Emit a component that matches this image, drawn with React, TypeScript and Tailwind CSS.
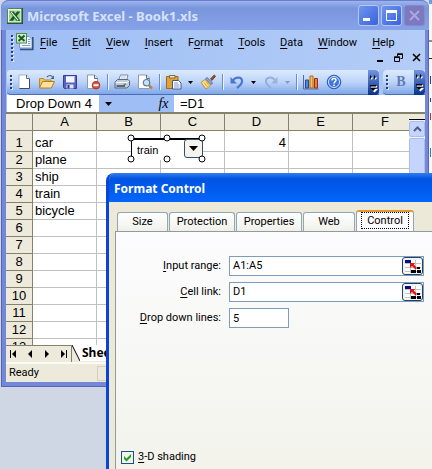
import { useState } from "react";
import type { ReactNode } from "react";

const MENUS = ["File", "Edit", "View", "Insert", "Format", "Tools", "Data", "Window", "Help"];
const COLUMNS = ["A", "B", "C", "D", "E", "F"];
const CARGO = ["car", "plane", "ship", "train", "bicycle"];
const ROWS = Array.from({ length: 12 }, (_, i) => i + 1);

function Mnemonic({ text, at = 0 }: { text: string; at?: number }) {
  return (
    <>
      {text.slice(0, at)}
      <span className="underline underline-offset-2">{text[at]}</span>
      {text.slice(at + 1)}
    </>
  );
}

function ExcelIcon({ className }: { className: string }) {
  return (
    <svg className={className} viewBox="0 0 16 16" aria-hidden="true">
      <rect x="0.5" y="0.5" width="15" height="15" rx="1" fill="#f4f8ee" stroke="#4d8a4a" />
      <path d="M0 15.2h16M15.2 0v16" stroke="#1d5c26" strokeWidth="1.6" />
      <rect x="2" y="2.500" width="11.500" height="11" fill="#a5cf98" />
      <path d="M2.500 3.500h4.200l1.600 2.300L10 3.500h3.200L9.900 8l3.600 4.800H9.300L7.700 10.300 6 12.800H2.300L6 8z" fill="#135d22" />
      <path d="M4.200 4.200l6.800 8" stroke="#f2faee" strokeWidth="1.100" />
    </svg>
  );
}

function WorkbookIcon() {
  return (
    <svg className="h-[18px] w-[18px]" viewBox="0 0 18 18" aria-hidden="true">
      <path d="M6 3.500h7l3 3V15H3.500V9z" fill="#f4f9ff" stroke="#7d95c0" />
      <path d="M16.800 4v12.500H4" fill="none" stroke="#34507e" strokeWidth="1.600" />
      <path d="M12 6.500h2.500M12 8.500h2.500M12 10.500h2.500M6 12.500h8.500" stroke="#7f9ccf" />
      <rect x="0.500" y="0.500" width="10" height="9.500" fill="#d6ebcd" stroke="#4d8a4a" />
      <path d="M2.500 2.500l6 5.500M8.500 2.500l-6 5.500" stroke="#135d22" strokeWidth="2" />
    </svg>
  );
}

const icons: Record<string, ReactNode> = {
  New: (
    <>
      <path d="M3 1h7.500l3 3v10.500H3z" fill="#fff" stroke="#a5b4d0" />
      <path d="M10.500 1v3.500h3" fill="#dce6f6" stroke="#5b6b8c" />
      <path d="M13.500 5v9.500H3.500" fill="none" stroke="#3b4a6b" />
    </>
  ),
  Open: (
    <>
      <path d="M.500 13.500v-9h4l1 1.500h6.500v7.500z" fill="#f3c45a" stroke="#b98a35" />
      <path d="M.500 14l3-6.500h12l-3.200 6.500z" fill="#ffe39a" stroke="#b07d24" />
      <path d="M8 3c2-2.200 4.500-1.800 5.500 0" fill="none" stroke="#50617f" strokeWidth="1.200" />
      <path d="M15 1.500v3.500h-3.500z" fill="#50617f" />
    </>
  ),
  Save: (
    <>
      <path d="M1.500 1.500h13v13h-12l-1-1z" fill="#5a63c4" stroke="#343c96" />
      <path d="M4 2h8.500v6.500H4z" fill="#f2f5ff" />
      <path d="M4 2.500h8.500" stroke="#cfd6f4" />
      <path d="M4.500 10.500h7v4h-7z" fill="#dfe4f6" />
      <path d="M5.500 11h2v3.500h-2z" fill="#2d3477" />
    </>
  ),
  Permission: (
    <>
      <path d="M2.500 1h7l3 3v10.500h-10z" fill="#fff" stroke="#8c9ab8" />
      <path d="M9.500 1v3.500h3" fill="#dce6f6" stroke="#5b6b8c" />
      <circle cx="11" cy="11.200" r="3.800" fill="#dd5238" stroke="#b03520" />
      <path d="M8.500 11.200h5" stroke="#fff" strokeWidth="2" />
    </>
  ),
  Print: (
    <>
      <path d="M4.500 6.500L6.500 1H14l-1.500 5.500z" fill="#fff" stroke="#7888a8" />
      <path d="M7 3h5M6.500 5h5" stroke="#b4c3de" />
      <path d="M1 8l2.500-2.500h10.500L15.500 7v4.500L13 14H1z" fill="#c3ccdb" stroke="#5c6883" />
      <path d="M1.500 8.500h11.500l2-1.500" fill="none" stroke="#f5f8fd" />
      <path d="M2.500 12h8.500" stroke="#38435e" strokeWidth="1.500" />
      <path d="M9.500 10.300h2.500" stroke="#3dae3b" strokeWidth="1.500" />
    </>
  ),
  "Print Preview": (
    <>
      <path d="M1.500 1h8l3 3v10.500h-11z" fill="#fff" stroke="#8c9ab8" />
      <path d="M9.500 1v3.500h3" fill="#dce6f6" stroke="#5b6b8c" />
      <circle cx="9.500" cy="8.700" r="3.200" fill="#c5e2fb" stroke="#62799c" strokeWidth="1.200" />
      <path d="M12 11.300l3 3.200" stroke="#b98331" strokeWidth="2.200" />
    </>
  ),
  Paste: (
    <>
      <path d="M.500 2.500h11.500v12H.500z" fill="#dfa13b" stroke="#9b6a1f" />
      <path d="M3.500 4v-2.500h5.500V4z" fill="#f7ecc8" stroke="#7a6a42" />
      <path d="M6.500 6.500h6l2.500 2.500v6H6.500z" fill="#fff" stroke="#43588a" />
      <path d="M8 9h4M8 11h5.500M8 13h5.500" stroke="#7c95c8" />
    </>
  ),
  "Format Painter": (
    <>
      <path d="M10.500 5l3.800-4 1.200 1.200-3.500 4.200z" fill="#8a5a2a" stroke="#65401b" />
      <path d="M7 3.500l5.500 5.500-1.500 1.500L5.500 5z" fill="#9aa9c8" stroke="#596a92" />
      <path d="M5 5.500l5.500 5.500c-1 1.500-2.500 3-4.500 4L1 8.500z" fill="#fbe191" stroke="#b98f3a" />
      <path d="M4 8.500L7.500 13M6 7.500l3 4" stroke="#d0a548" />
    </>
  ),
  Undo: (
    <>
      <path d="M4 6.500C7 2 14 3 13 8c-.500 3-3 4.500-5 6" fill="none" stroke="#4d78cc" strokeWidth="2.200" />
      <path d="M1.500 3v6.500H8z" fill="#4a77d3" />
    </>
  ),
  Redo: (
    <>
      <path d="M12 6.500C9 2 2 3 3 8c.500 3 3 4.500 5 6" fill="none" stroke="#97aed6" strokeWidth="2" />
      <path d="M14.500 3v6.500H8z" fill="#9db3da" />
    </>
  ),
  "Chart Wizard": (
    <>
      <path d="M.500 1v14H15.500" fill="none" stroke="#5a6b90" />
      <path d="M2.500 6h3v8h-3z" fill="#5b86dd" stroke="#234a9a" />
      <path d="M7 2h3v12H7z" fill="#fbc43c" stroke="#b5651b" />
      <path d="M11.500 4.500h3V14h-3z" fill="#ee7a3b" stroke="#97301b" />
    </>
  ),
  Help: (
    <>
      <circle cx="8" cy="8" r="6.800" fill="#3c74dc" stroke="#2c5cb8" />
      <circle cx="8" cy="8" r="5.500" fill="none" stroke="#dbe8ff" />
      <path d="M6 6.500c0-2.500 4-2.500 4-.300 0 1.500-2 1.500-2 3.300M8 10.500V12" fill="none" stroke="#fff" strokeWidth="1.500" />
    </>
  ),
};

function ToolButton({ name }: { name: string }) {
  return (
    <button type="button" aria-label={name} className="flex h-6 w-[23px] items-center justify-center">
      <svg className="h-4 w-4" viewBox="0 0 16 16" aria-hidden="true">
        {icons[name]}
      </svg>
    </button>
  );
}

function Caret({ dim = false, label }: { dim?: boolean; label: string }) {
  return (
    <button type="button" aria-label={label} className="flex h-6 w-[11px] items-center justify-center">
      <svg className="h-[3px] w-[5px]" viewBox="0 0 5 3" aria-hidden="true">
        <path d="M0 0h5L2.500 3z" fill={dim ? "#8498c0" : "#000"} />
      </svg>
    </button>
  );
}

function Separator() {
  return (
    <span className="flex h-6 w-[6px] justify-center py-1">
      <span className="w-px bg-[#6a8ccb] shadow-[1px_0_0_#eef5ff]" />
    </span>
  );
}

function Grip({ dots }: { dots: number }) {
  return (
    <span className="flex flex-col gap-[2px]">
      {Array.from({ length: dots }, (_, i) => (
        <span key={i} className="h-[2px] w-[2px] bg-[#27417b] shadow-[1px_1px_0_#dfeaff]" />
      ))}
    </span>
  );
}

function ToolbarEnd() {
  return (
    <button
      type="button"
      aria-label="Toolbar Options"
      className="flex h-[25px] w-[11px] shrink-0 items-center justify-center rounded-r-sm bg-linear-to-b from-[#7495e0] to-[#06308c]"
    >
      <svg className="h-5 w-[9px]" viewBox="0 0 9 20" aria-hidden="true">
        <path d="M2 3l2 2-2 2zM6 3l2 2-2 2z" fill="#fff" />
        <path d="M1 2l2 2-2 2zM5 2l2 2-2 2z" fill="#000" />
        <path d="M2 13h6v1.500H2zM2 16h7l-3.500 3.500z" fill="#fff" />
        <path d="M1 12h6v1.500H1zM1 15h6l-3 3z" fill="#000" />
      </svg>
    </button>
  );
}

function TitleBar() {
  return (
    <header className="flex h-[30px] items-center gap-1 rounded-t-lg border-t border-[#6a7fcb] bg-linear-to-b from-[#9db4ee] via-[#7996dd] via-25% to-[#86a2e8] pr-1 pl-[6px]">
      <ExcelIcon className="h-4 w-4" />
      <h1 className="flex-1 font-['Noto_Sans',sans-serif] text-[13px] leading-4 font-bold text-[#d5e2fb]">
        Microsoft Excel - Book1.xls
      </h1>
      <div className="flex gap-[2px]">
        <button type="button" aria-label="Minimize" className="h-[21px] w-[21px] rounded-[3px] border border-[#b5c8f5] bg-linear-to-br from-[#6f93ee] to-[#3863dc]">
          <svg viewBox="0 0 19 19" aria-hidden="true">
            <path d="M4 12h7v3H4z" fill="#fff" />
          </svg>
        </button>
        <button type="button" aria-label="Maximize" className="h-[21px] w-[21px] rounded-[3px] border border-[#b5c8f5] bg-linear-to-br from-[#6f93ee] to-[#3863dc]">
          <svg viewBox="0 0 19 19" aria-hidden="true">
            <path d="M4.500 5v9.500h10V5" fill="none" stroke="#fff" />
            <path d="M4 4h11v3H4z" fill="#fff" />
          </svg>
        </button>
        <button type="button" aria-label="Close" className="h-[21px] w-[21px] rounded-[3px] border border-[#8a88cb] bg-[#7b7ac0]">
          <svg viewBox="0 0 19 19" aria-hidden="true">
            <path d="M5 5l9 9M14 5l-9 9" stroke="#b1a6dc" strokeWidth="2" />
          </svg>
        </button>
      </div>
    </header>
  );
}

function MenuBar() {
  return (
    <div className="flex h-10 items-start bg-linear-to-r from-[#9ebef5] to-[#b4cdf7] pl-[5px]">
      <div className="flex pt-[5px]">
        <Grip dots={7} />
      </div>
      <div className="ml-[3px] pt-[3px]">
        <WorkbookIcon />
      </div>
      <div className="flex flex-1 flex-col">
        <nav className="ml-[6px] flex gap-[15px] pt-[5px] text-[11px] leading-4">
          {MENUS.map((menu) => (
            <button key={menu} type="button">
              <Mnemonic text={menu} at={menu === "Format" ? 1 : 0} />
            </button>
          ))}
        </nav>
        <div className="flex justify-end gap-[9px] pt-[2px] pr-1">
          <button type="button" aria-label="Minimize workbook">
            <svg className="h-[9px] w-[9px]" viewBox="0 0 9 9" aria-hidden="true">
              <path d="M1 7h6v2H1z" />
            </svg>
          </button>
          <button type="button" aria-label="Restore workbook">
            <svg className="h-[9px] w-[9px]" viewBox="0 0 9 9" aria-hidden="true">
              <path d="M3.500 3V1h5v4.500H6.500M.500 4h5v4.500h-5z" fill="none" stroke="#000" />
              <path d="M3 .500h6v1.500H3zM0 3.500h6V5H0z" />
            </svg>
          </button>
          <button type="button" aria-label="Close workbook">
            <svg className="h-[9px] w-[9px]" viewBox="0 0 9 9" aria-hidden="true">
              <path d="M1 1l7 7M8 1L1 8" stroke="#000" strokeWidth="1.600" />
            </svg>
          </button>
        </div>
      </div>
    </div>
  );
}

function Toolbars() {
  return (
    <div className="flex gap-1 bg-[#a9c5f5] pl-px">
      <div className="flex h-[25px] flex-1 rounded-l-sm border-b border-[#4a6cb5] bg-linear-to-b from-[#dceafe] via-[#bdd4f9] to-[#80a7e8]">
        <div className="flex flex-1 items-center pl-[3px]">
          <Grip dots={4} />
          <ToolButton name="New" />
          <ToolButton name="Open" />
          <ToolButton name="Save" />
          <ToolButton name="Permission" />
          <Separator />
          <ToolButton name="Print" />
          <ToolButton name="Print Preview" />
          <Separator />
          <ToolButton name="Paste" />
          <Caret label="Paste options" />
          <ToolButton name="Format Painter" />
          <Separator />
          <ToolButton name="Undo" />
          <Caret label="Undo list" />
          <ToolButton name="Redo" />
          <Caret label="Redo list" dim />
          <Separator />
          <ToolButton name="Chart Wizard" />
          <ToolButton name="Help" />
        </div>
        <ToolbarEnd />
      </div>
      <div className="flex h-[25px] w-[42px] items-center rounded-l-sm border-b border-[#4a6cb5] bg-linear-to-b from-[#dceafe] via-[#bdd4f9] to-[#80a7e8] pl-[3px]">
        <Grip dots={4} />
        <button type="button" className="flex-1 font-['Liberation_Serif',serif] text-[14px] leading-4 font-bold text-[#5f7cb5]">
          B
        </button>
        <ToolbarEnd />
      </div>
    </div>
  );
}

function FormulaBar() {
  return (
    <div className="flex h-[17px] bg-[#9ebef5] pl-px font-['Liberation_Sans',sans-serif] text-[13px] leading-4">
      <input aria-label="Name box" defaultValue="Drop Down 4" className="w-[92px] bg-white pl-[9px] outline-none" />
      <button type="button" aria-label="Names" className="flex w-[18px] items-center justify-center">
        <svg className="h-1 w-[7px]" viewBox="0 0 7 4" aria-hidden="true">
          <path d="M0 0h7L3.500 4z" />
        </svg>
      </button>
      <button type="button" className="ml-9 w-[21px] font-['Liberation_Serif',serif] text-[14px] leading-4 italic">
        fx
      </button>
      <input aria-label="Formula" defaultValue="=D1" className="min-w-0 flex-1 bg-white pl-[6px] outline-none" />
    </div>
  );
}

function SheetDropDown() {
  return (
    <div className="absolute top-6 left-[125px] h-[22px] w-[72px]">
      <select
        aria-label="Drop Down 4"
        defaultValue="train"
        className="h-full w-full appearance-none border-t-2 border-l border-black bg-white pl-[5px] text-[11px] leading-4 outline-none"
      >
        {CARGO.map((item) => (
          <option key={item}>{item}</option>
        ))}
      </select>
      <span className="pointer-events-none absolute top-px right-0 flex h-[19px] w-[19px] items-center justify-center rounded-[3px] border border-[#2c5078] bg-[#f4f3ec]">
        <svg className="h-[5px] w-[9px]" viewBox="0 0 9 5" aria-hidden="true">
          <path d="M0 0h9L4.500 5z" />
        </svg>
      </span>
      {/* selection handles */}
      <svg className="pointer-events-none absolute -top-1 -left-1 h-[29px] w-20" viewBox="0 0 80 29" aria-hidden="true">
        {[4, 40, 75].map((x) =>
          [4, 25].map((y) => <circle key={`${x}-${y}`} cx={x} cy={y} r="3" fill="#fff" stroke="#000" />),
        )}
      </svg>
    </div>
  );
}

function Sheet() {
  return (
    <div className="relative flex border-t-2 border-[#85826c] bg-white font-['Liberation_Sans',sans-serif] text-[13px] leading-4">
      <table className="flex-1 table-fixed border-separate border-spacing-0">
        <colgroup>
          <col className="w-[27px]" />
          <col className="w-16" />
          <col className="w-16" />
          <col className="w-16" />
          <col className="w-16" />
          <col className="w-16" />
          <col />
        </colgroup>
        <thead>
          <tr className="h-[17px] bg-[#edeadb]">
            <td className="border-r border-b border-[#85826c] p-0" />
            {COLUMNS.map((col) => (
              <th
                key={col}
                scope="col"
                className="border-r border-b border-[#85826c] p-0 font-normal last:border-r-0 last:pl-2"
              >
                {col}
              </th>
            ))}
          </tr>
        </thead>
        <tbody>
          {ROWS.map((row) => (
            <tr key={row} className="h-[17px] first:h-[21px]">
              <th scope="row" className="border-r border-b border-[#85826c] bg-[#edeadb] p-0 align-bottom font-normal">
                {row}
              </th>
              {COLUMNS.map((col) => (
                <td
                  key={col}
                  className="border-r border-b border-[#c0c0c0] px-[2px] py-0 align-bottom last:border-r-0 nth-[5]:text-right"
                >
                  {col === "A" && CARGO[row - 1]}
                  {col === "D" && row === 1 && "4"}
                </td>
              ))}
            </tr>
          ))}
          {/* last row is cut off by the tab strip */}
          <tr>
            <th scope="row" className="border-r border-[#85826c] bg-[#edeadb] p-0 font-normal">
              <div className="h-[6px] overflow-hidden">13</div>
            </th>
            {COLUMNS.map((col) => (
              <td key={col} className="border-r border-[#c0c0c0] p-0 last:border-r-0" />
            ))}
          </tr>
        </tbody>
      </table>
      <div className="flex w-4 flex-col bg-[#f3f2ec]">
        <div className="h-[6px] border-b border-black bg-[#edeadb]" />
        <button
          type="button"
          aria-label="Scroll up"
          className="mt-px flex h-4 items-center justify-center rounded-[2px] border border-[#a9bdf0] bg-[#c5d4fc]"
        >
          <svg className="h-[6px] w-[9px]" viewBox="0 0 9 6" aria-hidden="true">
            <path d="M1 5l3.500-3.500L8 5" fill="none" stroke="#4d6185" strokeWidth="2" />
          </svg>
        </button>
        <div className="mt-px flex-1 rounded-[2px] border border-[#a9bdf0] bg-[#c5d4fc]" />
      </div>
      <SheetDropDown />
    </div>
  );
}

function SheetTabs() {
  const arrows = [
    { label: "First sheet", d: "M1 0h1v8H1zM7 0v8L3 4z" },
    { label: "Previous sheet", d: "M6 0v8L2 4z" },
    { label: "Next sheet", d: "M2 0v8l4-4z" },
    { label: "Last sheet", d: "M6 0h1v8H6zM1 0v8l4-4z" },
  ];
  return (
    <div className="flex h-[17px] bg-[#edeadb]">
      <div className="flex w-[66px] justify-between border-t border-r border-[#85826c] px-[3px]">
        {arrows.map((a) => (
          <button key={a.label} type="button" aria-label={a.label}>
            <svg className="h-2 w-2" viewBox="0 0 8 8" aria-hidden="true">
              <path d={a.d} />
            </svg>
          </button>
        ))}
      </div>
      <svg className="h-4 w-2 bg-white" viewBox="0 0 8 16" aria-hidden="true">
        <path d="M0 0l8 16H0z" fill="#edeadb" />
        <path d="M0 0l8 16" stroke="#000" />
      </svg>
      <button type="button" className="h-4 bg-white px-[2px] font-['Noto_Sans',sans-serif] text-[12px] leading-4 font-bold">
        Sheet1
      </button>
    </div>
  );
}

function StatusBar() {
  return (
    <footer className="flex h-5 items-center border-t-2 border-[#fbfaf5] bg-[#edeadb] pr-1 pl-[3px] text-[11px] leading-4">
      <span className="w-[88px]">Ready</span>
      <span className="h-[15px] flex-1 border border-[#d3d0c0]" />
    </footer>
  );
}

function RangePicker({ label }: { label: string }) {
  return (
    <button
      type="button"
      aria-label={label}
      className="flex h-[18px] w-[21px] shrink-0 items-center justify-center rounded-[3px] border border-[#1c4470] bg-[#f2f2ee]"
    >
      <svg className="h-[13px] w-4" viewBox="0 0 16 13" aria-hidden="true">
        <path d="M0 0h16v13H0z" fill="#fff" />
        <path d="M0 3.500h16M0 7.500h16M0 11.500h16M5.500 0v13M10.500 0v13" stroke="#c3c3c3" />
        <path d="M0 0h6v3H0z" fill="#0a0a8c" />
        <path d="M6 10h5v3H6zM12 10h4v3h-4zM12 7h3v2h-3z" fill="#000" />
        <path d="M5 3h5L8.800 4.500 12 8l-1.500 1.500L7 6 5 8z" fill="#e81010" />
      </svg>
    </button>
  );
}

function FormatDialog() {
  const [tab, setTab] = useState("Control");
  const tabs = [
    { name: "Size", width: "w-[51px]" },
    { name: "Protection", width: "w-[66px]" },
    { name: "Properties", width: "w-[66px]" },
    { name: "Web", width: "w-[52px]" },
    { name: "Control", width: "w-[58px]" },
  ];
  return (
    <section
      role="dialog"
      aria-label="Format Control"
      className="absolute top-[173px] right-0 bottom-0 left-[106px] flex flex-col overflow-hidden rounded-tl-lg border-l-[3px] border-[#0a45d6] bg-[#ece9d8]"
    >
      <header className="h-[29px] bg-linear-to-b from-[#2f7df0] via-[#0053e1] via-20% to-[#0466fb] pl-[5px]">
        <h2 className="font-['Noto_Sans',sans-serif] text-[12px] leading-8 font-bold text-white">Format Control</h2>
      </header>
      <div className="flex h-[29px] items-end gap-px pl-2" role="tablist">
        {tabs.map(({ name, width }) => (
          <button
            key={name}
            type="button"
            role="tab"
            aria-selected={tab === name}
            onClick={() => setTab(name)}
            className={`${width} rounded-t-[3px] border border-b-0 border-[#91a7b4] ${
              tab === name
                ? "h-[21px] border-t-2 border-t-[#e5972d] bg-[#fcfcfe] px-1 pb-[2px]"
                : "h-[19px] bg-linear-to-b from-white to-[#f0f0ea]"
            }`}
          >
            <span className={tab === name ? "block border border-dotted border-black leading-[15px]" : "block leading-4"}>
              {name}
            </span>
          </button>
        ))}
      </div>
      <div className="ml-[6px] flex flex-1 flex-col border-t border-l border-[#919b9c] bg-linear-to-b from-[#fcfcfe] to-[#f3f3ec] pt-6 pr-2 pb-1 pl-1">
        <div className="grid grid-cols-[101px_1fr] items-center gap-x-2 gap-y-[6px]">
          <label htmlFor="range" className="text-right">
            <Mnemonic text="Input range:" />
          </label>
          <div className="flex h-5 border border-[#7f9db9] bg-white">
            <input id="range" defaultValue="A1:A5" className="min-w-0 flex-1 pl-[3px] outline-none" />
            <RangePicker label="Pick input range" />
          </div>
          <label htmlFor="link" className="text-right">
            <Mnemonic text="Cell link:" />
          </label>
          <div className="flex h-5 border border-[#7f9db9] bg-white">
            <input id="link" defaultValue="D1" className="min-w-0 flex-1 pl-[3px] outline-none" />
            <RangePicker label="Pick cell link" />
          </div>
          <label htmlFor="lines" className="text-right">
            <Mnemonic text="Drop down lines:" />
          </label>
          <input id="lines" defaultValue="5" className="h-5 w-[60px] border border-[#7f9db9] bg-white pl-[3px] outline-none" />
        </div>
        <label className="mt-auto flex items-center gap-1 pl-px">
          <span className="relative h-[13px] w-[13px]">
            <input
              type="checkbox"
              defaultChecked
              className="peer block h-[13px] w-[13px] appearance-none border border-[#1c5180] bg-[#f3f3ee]"
            />
            <svg
              className="pointer-events-none absolute top-0 left-0 hidden h-[13px] w-[13px] peer-checked:block"
              viewBox="0 0 13 13"
              aria-hidden="true"
            >
              <path d="M3 5v3l2.500 2.500L10 6V3L5.500 7.500z" fill="#21a121" />
            </svg>
          </span>
          <span>
            <Mnemonic text="3-D shading" />
          </span>
        </label>
      </div>
    </section>
  );
}

export default function App() {
  return (
    <main className="relative min-h-screen bg-[#cfd6e4] font-['Roboto',sans-serif] text-[11px] leading-4 text-black">
      {/* edge of the document behind the workbook */}
      <svg className="absolute top-0 right-0 h-[173px] w-[3px] bg-[#f7f8fd]" viewBox="0 0 3 173" aria-hidden="true">
        <path d="M0 0h3v4H0z" fill="#6f9be0" />
        <path d="M0 41h3M0 58.500h3" stroke="#222" />
        <path d="M1.500 76v8M1.500 98v4" stroke="#2b3a9c" />
        <path d="M1.500 113v7" stroke="#b0324a" />
        <path d="M1.500 148v9" stroke="#2b7ac0" />
      </svg>
      <div className="pr-[3px] pl-px">
        <div className="relative rounded-t-lg bg-[#7488d9]">
          <TitleBar />
          <div className="border-x border-b border-[#5764b8] pr-[3px] pb-1 pl-1">
            <MenuBar />
            <Toolbars />
            <FormulaBar />
            <Sheet />
            <SheetTabs />
            <StatusBar />
          </div>
        </div>
      </div>
      <FormatDialog />
    </main>
  );
}
